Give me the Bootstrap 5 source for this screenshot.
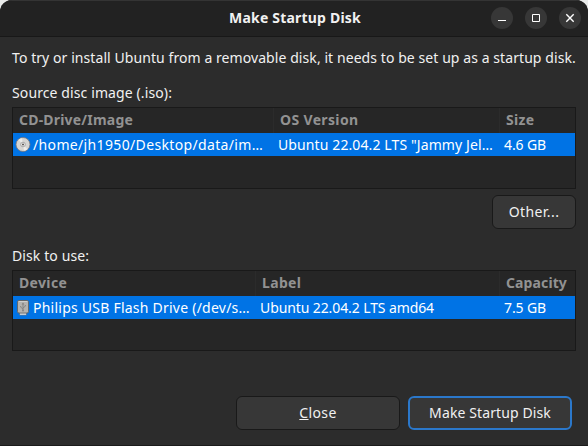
<!DOCTYPE html>
<html lang="en">
<head>
<meta charset="utf-8">
<meta name="viewport" content="width=device-width, initial-scale=1">
<title>Make Startup Disk</title>
<link rel="stylesheet" href="https://cdn.jsdelivr.net/npm/bootstrap@5.3.0/dist/css/bootstrap.min.css">
<style>
  html, body { height: 100%; overflow: hidden; }
  body { background: #e9ebea; font: 14px/20px "Noto Sans", sans-serif; color: #f1f1f1; white-space: nowrap; }
  .dialog-window { height: 446px; background: #2c2c2c; border-radius: 12px 12px 0 0; border-bottom: 1px solid #1b1b1b; }
  .title-bar { height: 37px; background: #222; border-bottom: 1px solid #181818; box-shadow: inset 0 1px #343434; padding: 0 7px 0 9px; }
  .title-side { flex: 1 1 0; }
  .window-btn { width: 22px; height: 22px; border: 0; padding: 0; border-radius: 50%; background: #373737; color: #fff; }
  .dialog-content { padding: 11px 12px 0; }
  .tree-view { height: 82px; background: #262626; border: 1px solid #191919; }
  .device-grid { height: 81px; }
  .tree-row { display: grid; }
  .source-grid .tree-row { grid-template-columns: 261px 226px 1fr; }
  .device-grid .tree-row { grid-template-columns: 243px 244px 1fr; }
  .tree-head { height: 25px; color: #929292; font-weight: 700; line-height: 24px; }
  .tree-head > div { padding-left: 6px; border-right: 1px solid #2b2b2b; }
  .tree-head > div:last-child { border: 0; }
  .tree-selected { height: 23px; background: #0073e5; color: #fff; line-height: 23px; }
  .tree-selected > div { padding-left: 4px; }
  .tree-selected > .icon-cell { padding-left: 2px; gap: 2px; }
  .dialog-btn { height: 34px; padding: 0; border: 1px solid #191919; border-radius: 6px; background: #373737; color: #f1f1f1; font-size: 14px; line-height: 20px; }
  .dialog-btn:hover { background: #3d3d3d; color: #fff; }
  .btn-other { width: 84px; letter-spacing: .42px; }
  .btn-action { width: 164px; }
  .btn-default { border: 2px solid #2b78cb; }
  .ls-tight { letter-spacing: -.1px; }
  .ls-intro { letter-spacing: .074px; } .ls-1 { letter-spacing: .11px; }
  .ls-2 { letter-spacing: .2px; } .ls-3 { letter-spacing: .35px; }
  .ls-philips { letter-spacing: .235px; }
</style>
<script defer src="https://cdn.jsdelivr.net/npm/bootstrap@5.3.0/dist/js/bootstrap.bundle.min.js"></script>
</head>
<body>
<div class="dialog-window overflow-hidden d-flex flex-column">
  <header class="title-bar d-flex align-items-center flex-shrink-0">
    <div class="title-side"></div>
    <div class="fw-bold ls-2">Make Startup Disk</div>
    <div class="title-side d-flex justify-content-end" style="gap:12px">
      <button class="window-btn d-flex" aria-label="Minimize"><svg width="22" height="22"><path d="M7 13.5h8" stroke="currentColor"/></svg></button>
      <button class="window-btn d-flex" aria-label="Maximize"><svg width="22" height="22"><path d="M7.5 7.5h7v7h-7z" fill="none" stroke="currentColor"/></svg></button>
      <button class="window-btn d-flex" aria-label="Close"><svg width="22" height="22"><path d="M7.3 7.3l7.4 7.4M14.7 7.3l-7.4 7.4" stroke="currentColor" stroke-width="1.4"/></svg></button>
    </div>
  </header>
  <main class="dialog-content flex-grow-1 d-flex flex-column">
    <div class="ls-intro">To try or install Ubuntu from a removable disk, it needs to be set up as a startup disk.</div>
    <div class="ls-1" style="margin-top:15px">Source disc image (.iso):</div>
    <section class="tree-view source-grid" style="margin-top:4px">
      <div class="tree-row tree-head"><div class="ls-2">CD-Drive/Image</div><div class="ls-3">OS Version</div><div class="ls-3">Size</div></div>
      <div class="tree-row tree-selected">
        <div class="icon-cell d-flex align-items-center">
          <svg width="16" height="16" viewBox="0 0 16 16" class="flex-shrink-0"><circle cx="8" cy="7.5" r="7" fill="#d6d5d2" stroke="#77757a" stroke-width=".8"/><path d="M8 7.5L3.5 2.8A6.5 6.5 0 0 1 7 1.2zM8 7.5l4.5 4.7A6.5 6.5 0 0 1 9 13.8z" fill="#ececea"/><circle cx="8" cy="7.5" r="2.3" fill="#eee" stroke="#999" stroke-width=".8"/><circle cx="8" cy="7.5" r="1" fill="#55504b"/></svg>
          <span class="ls-3">/home/jh1950/Desktop/data/im…</span>
        </div>
        <div class="ls-1">Ubuntu 22.04.2 LTS "Jammy Jel…</div><div class="ls-tight">4.6 GB</div>
      </div>
    </section>
    <button class="btn dialog-btn btn-other align-self-end" style="margin-top:6px">Other...</button>
    <div class="ls-1" style="margin-top:17px">Disk to use:</div>
    <section class="tree-view device-grid" style="margin-top:4px">
      <div class="tree-row tree-head"><div class="ls-3">Device</div><div class="ls-3">Label</div><div class="ls-1">Capacity</div></div>
      <div class="tree-row tree-selected">
        <div class="icon-cell d-flex align-items-center">
          <svg width="16" height="16" viewBox="0 0 16 16" class="flex-shrink-0"><path d="M4.5 12.5h7v2.6h-7z" fill="#f4f4f4" stroke="#46688c" stroke-width=".7"/><rect x="2.5" y=".5" width="11" height="12.6" rx="1.5" fill="#b4b3b0" stroke="#63686c"/><path d="M3.5 1.5h9" stroke="#cfcfcd"/><path d="M8 3.5v7M5.7 6v1.2L8 9M10.3 5v1.2L8 8" fill="none" stroke="#858482"/><circle cx="8" cy="10.5" r="1" fill="#858482"/><path d="M6.6 4.4L8 2.6l1.4 1.8z" fill="#858482"/></svg>
          <span class="ls-philips">Philips USB Flash Drive (/dev/s…</span>
        </div>
        <div class="ls-tight">Ubuntu 22.04.2 LTS amd64</div><div class="ls-tight">7.5 GB</div>
      </div>
    </section>
    <footer class="d-flex justify-content-end gap-2" style="margin-top:45px;padding-right:4px">
      <button class="btn dialog-btn btn-action ls-3"><u>C</u>lose</button>
      <button class="btn dialog-btn btn-action btn-default ls-1">Make Startup Disk</button>
    </footer>
  </main>
</div>
</body>
</html>
